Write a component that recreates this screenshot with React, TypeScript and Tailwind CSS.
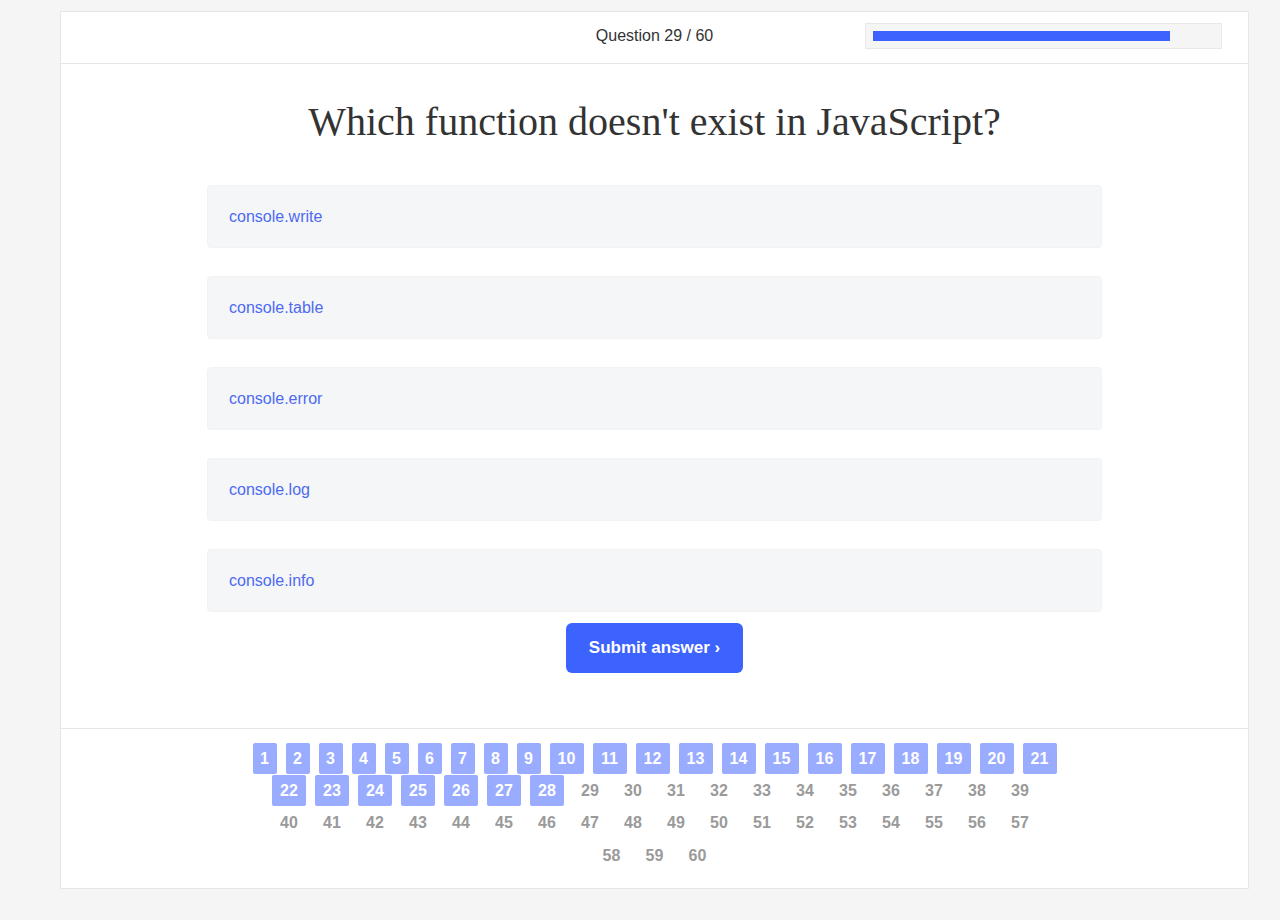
import React from "react";

const options = ["console.write", "console.table", "console.error", "console.log", "console.info"];

const rows: number[][] = [
  Array.from({ length: 21 }, (_, i) => i + 1),
  Array.from({ length: 18 }, (_, i) => i + 22),
  Array.from({ length: 18 }, (_, i) => i + 40),
  [58, 59, 60],
];

export default function App() {
  return (
    <div className="min-h-[920px] w-[1280px] bg-[#f5f5f5] pt-[11px]" style={{ fontFamily: '"Liberation Sans", Arial, sans-serif' }}>
      <div className="ml-[60px] w-[1189px] h-[878px] border border-[#e6e6e6] bg-white flex flex-col">
        <div className="h-[52px] pb-[4px] border-b border-[#e6e6e6] grid grid-cols-3 items-center">
          <div />
          <div className="text-center text-[16px] text-[#333]">Question 29 / 60</div>
          <div className="pl-[13px] pr-[26px]">
            <div className="h-[26px] border border-[#e8e8e8] bg-[#f5f5f5] px-[7px] flex items-center">
              <div className="h-[10px] bg-[#3d63ff]" style={{ width: "297px" }} />
            </div>
          </div>
        </div>
        <div className="flex flex-col items-center">
          <h1 className="mt-[35px] text-[40px] leading-[46px] text-[#333]" style={{ fontFamily: '"Liberation Serif", Georgia, serif' }}>
            Which function doesn't exist in JavaScript?
          </h1>
          <div className="mt-[40px] flex flex-col gap-[28px] w-[895px]">
            {options.map((o) => (
              <div key={o} className="h-[63px] rounded-[4px] bg-[#f5f6f8] border border-[#f1f2f4] flex items-center pl-[21px] pt-[1px] text-[16px] text-[#4d6af0]">
                {o}
              </div>
            ))}
          </div>
          <button className="mt-[11px] w-[177px] h-[50px] rounded-[6px] bg-[#3d63ff] text-white font-bold text-[17px]">
            Submit answer ›
          </button>
        </div>
        <div className="mt-[55px] border-t border-[#e6e6e6] pt-[14px] flex flex-col">
          {rows.map((r, ri) => (
            <div key={ri} className={`flex justify-center gap-x-[9px] ${ri === 3 ? "mt-[1px]" : ""} h-[32px]`}>
              {r.map((n) => {
                const w = n < 10 ? "w-[24px]" : "w-[34px]";
                return n <= 28 ? (
                  <div key={n} className={`h-[31px] ${w} rounded-[2px] bg-[#9aacff] text-white font-bold text-[16px] flex items-center justify-center`}>
                    {n}
                  </div>
                ) : (
                  <div key={n} className={`h-[31px] ${w} text-[#9a9a9a] font-bold text-[16px] flex items-center justify-center`}>
                    {n}
                  </div>
                );
              })}
            </div>
          ))}
        </div>
      </div>
    </div>
  );
}
